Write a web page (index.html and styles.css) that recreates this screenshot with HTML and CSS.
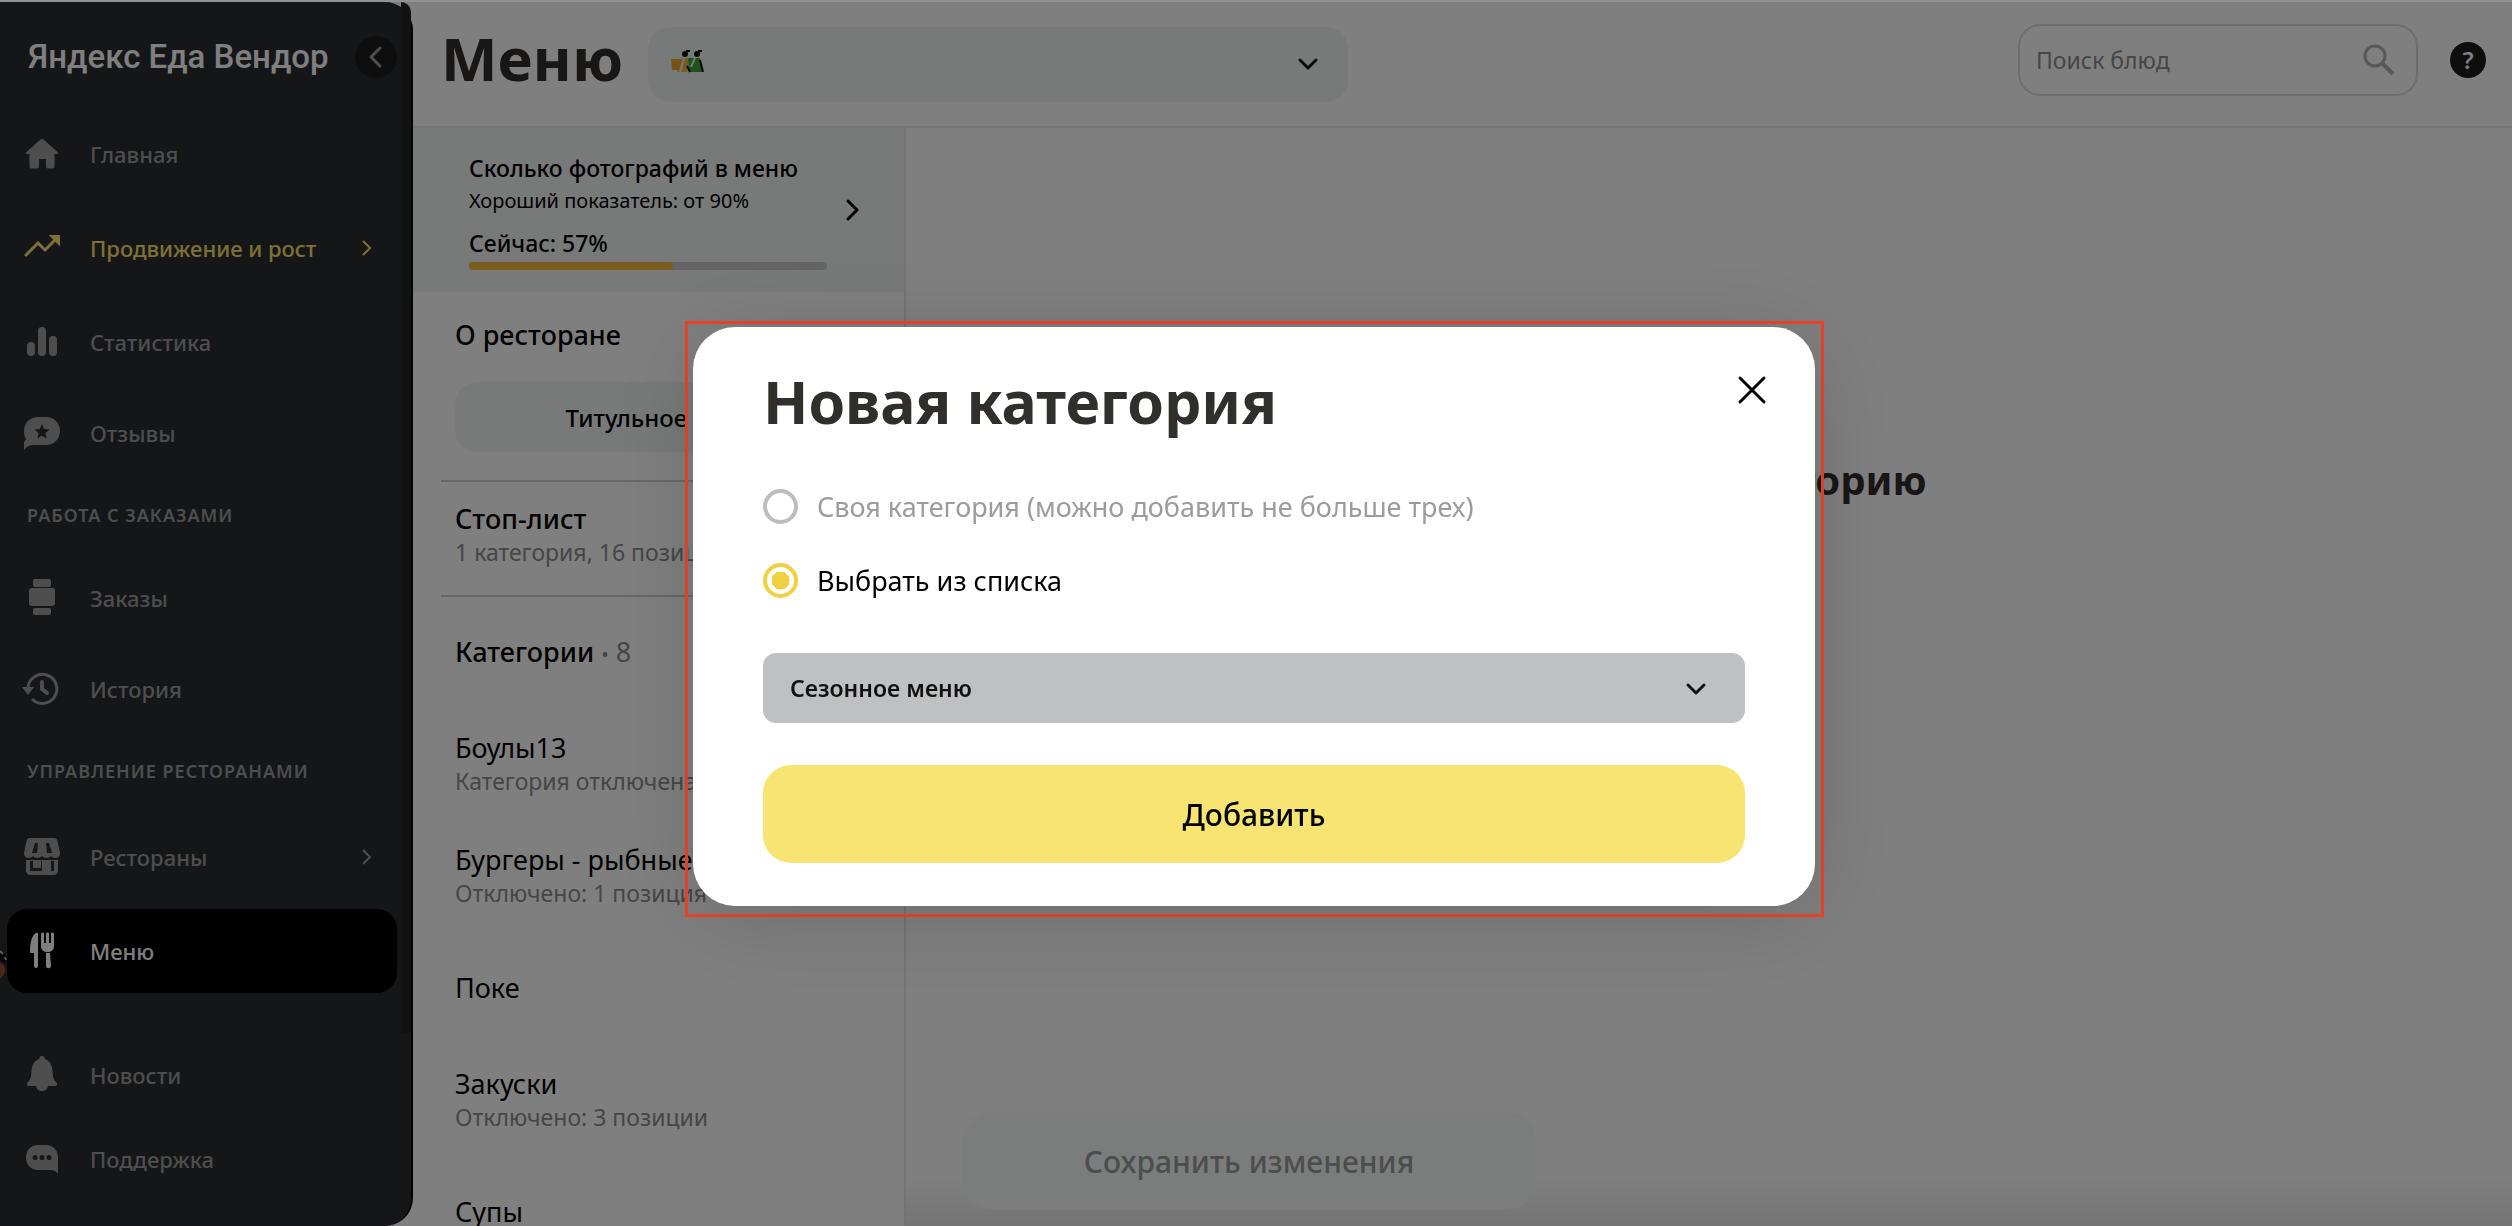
FILE: index.html
```html
<!DOCTYPE html>
<html lang="ru">
<head>
    <meta charset="UTF-8">
    <meta name="viewport" content="width=device-width, initial-scale=1.0">
    <title>Яндекс Еда Вендор</title>
    <link rel="stylesheet" href="styles.css">
</head>
<body>
    <div class="app">
        <aside class="sidebar">
            <div class="sidebar-top">
                <span class="logo">Яндекс Еда Вендор</span>
                <button type="button" class="collapse" aria-label="Свернуть">
                    <svg width="42" height="42" viewBox="0 0 42 42" fill="none" stroke="currentColor" stroke-width="3" stroke-linecap="round" stroke-linejoin="round"><path d="M25 12l-9 9 9 9"/></svg>
                </button>
            </div>

            <nav class="nav">
                <a href="#" class="nav-item">
                    <svg class="icon" viewBox="0 0 40 40" fill="currentColor"><path d="M18.500 5.500c1-.8 2-.8 3 0L35.500 18c1 1 .8 2-.5 2h-2.500v12.500a2 2 0 0 1-2 2H26a2 2 0 0 1-2-2V25h-7v7.500a2 2 0 0 1-2 2H9.500a2 2 0 0 1-2-2V20H5c-1.300 0-1.500-1-.5-2z"/></svg>
                    Главная
                </a>
                <a href="#" class="nav-item promo has-sub">
                    <svg class="icon" viewBox="0 0 40 40" fill="none" stroke="currentColor" stroke-width="3"><path d="M4 27l12-12 7 7 11-11" stroke-linecap="round"/><path d="M29 8h8v8z" fill="currentColor" stroke-width="2"/></svg>
                    Продвижение и рост
                    <svg class="arrow" viewBox="0 0 20 20" fill="none" stroke="currentColor" stroke-width="2"><path d="M6 3l7 7-7 7"/></svg>
                </a>
                <a href="#" class="nav-item">
                    <svg class="icon" viewBox="0 0 40 40" fill="currentColor"><rect x="5" y="20" width="8" height="14" rx="4"/><rect x="16" y="5" width="8" height="29" rx="4"/><rect x="27" y="14" width="8" height="20" rx="4"/></svg>
                    Статистика
                </a>
                <a href="#" class="nav-item">
                    <svg class="icon" viewBox="0 0 40 40" fill="currentColor" fill-rule="evenodd"><path d="M16 4h8c8 0 14 6 14 14s-6 14-14 14H11c-4 0-7 2-9 5v-8c1-1 2-2 2-3C2.500 24 2 21 2 18 2 10 8 4 16 4zm4 7l-2.200 5-5.300.6 4 3.600-1.200 5.400 4.700-2.800 4.700 2.800-1.200-5.400 4-3.600-5.300-.6z"/></svg>
                    Отзывы
                </a>

                <h3 class="nav-heading">РАБОТА С ЗАКАЗАМИ</h3>
                <a href="#" class="nav-item">
                    <svg class="icon" viewBox="0 0 40 40" fill="currentColor"><rect x="11" y="1" width="18" height="8" rx="2"/><rect x="7" y="10" width="26" height="18" rx="3"/><rect x="11" y="30" width="18" height="7" rx="2"/></svg>
                    Заказы
                </a>
                <a href="#" class="nav-item">
                    <svg class="icon" viewBox="0 0 40 40" fill="none" stroke="currentColor" stroke-width="3"><path d="M6 18a14.500 14.500 0 1 1 4 12"/><path d="M20 13v7l5 4" stroke-width="4" stroke-linecap="round"/><path d="M0 18h12l-6 8z" fill="currentColor" stroke="none"/></svg>
                    История
                </a>

                <h3 class="nav-heading">УПРАВЛЕНИЕ РЕСТОРАНАМИ</h3>
                <a href="#" class="nav-item has-sub">
                    <svg class="icon" viewBox="0 0 40 40" fill="currentColor" fill-rule="evenodd"><path d="M8 1h24c2 0 3 1 3.500 3L38 16c0 3-2 5-4.500 5-2 0-3.500-1-4.500-2-1 1-2.500 2-4.500 2s-3.500-1-4.500-2c-1 1-2.500 2-4.500 2s-3.500-1-4.500-2c-1 1-2.500 2-4.500 2C4 21 2 19 2 16L4.500 4C5 2 6 1 8 1zm5 5l-3 10h5l1-10zm11 0l1 10h5l-3-10z"/><path d="M4 23h32v11c0 2-2 4-4 4H8c-2 0-4-2-4-4zm4 1v10h24V24h-3v10h-9V24z"/><rect x="11" y="24" width="8" height="7"/></svg>
                    Рестораны
                    <svg class="arrow" viewBox="0 0 20 20" fill="none" stroke="currentColor" stroke-width="2"><path d="M6 3l7 7-7 7"/></svg>
                </a>
                <a href="#" class="nav-item active">
                    <svg class="icon" viewBox="0 0 40 40" fill="currentColor"><path d="M16 2v33a2 2 0 0 1-4 0V22H9c-1 0-1-1-1-2C8 11 10 4 14 2c1-.5 2-.5 2 0z"/><path d="M19 3c0-2 3-2 3 0v9h2V3c0-2 3-2 3 0v9h2V3c0-2 3-2 3 0v12c0 4-3 6-6.500 6S19 19 19 15zM24 22h4l1 13c0 3-5 3-5 0z"/></svg>
                    Меню
                </a>
                <svg class="sticker" width="8" height="32" viewBox="0 0 8 32"><path d="M0 14c4 1 6 5 5 9-1 3-3 5-5 6z" fill="#9c4a38"/><path d="M0 2c4 1 7 4 7 9l-2 3c-2-1-3-2-5-2z" fill="#0c0c0c"/><path d="M0 2l3 3M5 8l1 3" stroke="#bdbdbd" stroke-width="2"/></svg>
            </nav>

            <nav class="nav nav-bottom">
                <a href="#" class="nav-item">
                    <svg class="icon" viewBox="0 0 40 40" fill="currentColor"><path d="M20 1c2 0 2.500 1.500 3 3 5 2 7 6 7.500 12 .3 6 1 9 3.500 11 2 2 1 4-1 4h-7c-.5 3-3 5-6 5s-5.500-2-6-5H7c-2 0-3-2-1-4 2.500-2 3.200-5 3.500-11C10 10 12 6 17 4c.5-1.500 1-3 3-3z"/></svg>
                    Новости
                </a>
                <a href="#" class="nav-item">
                    <svg class="icon" viewBox="0 0 40 40" fill="currentColor" fill-rule="evenodd"><path d="M16 6h8c7 0 12 5 12 12v17c-2-3-4-4-8-4H16C9 31 4 26 4 18.500S9 6 16 6zm-3 10a2.500 2.500 0 1 0 0 5 2.500 2.500 0 0 0 0-5zm7 0a2.500 2.500 0 1 0 0 5 2.500 2.500 0 0 0 0-5zm7 0a2.500 2.500 0 1 0 0 5 2.500 2.500 0 0 0 0-5z"/></svg>
                    Поддержка
                </a>
            </nav>
            <span class="scrollbar"></span>
        </aside>

        <div class="content">
            <header class="header">
                <h1>Меню</h1>
                <div class="select-box place">
                    <svg class="couriers" width="34" height="24" viewBox="0 0 34 24">
                        <path d="M1 9h13l-1 11H2z" fill="#eaa928"/><path d="M12 8h7l-2 14H7l3-5z" fill="#f2b83a"/>
                        <path d="M18 8h12l2 14H19z" fill="#3fa339"/><path d="M14 8l-4 14M25 8l-4 9" stroke="#eee" stroke-width="2"/>
                        <circle cx="15" cy="4" r="3" fill="#111"/><circle cx="27" cy="4" r="3" fill="#111"/>
                        <path d="M16 1h4M28 1h4M17 16l3 6M30 10l3 12" stroke="#111" stroke-width="2"/>
                    </svg>
                    <select aria-label="Ресторан"><option></option></select>
                    <svg class="chevron" width="24" height="24" viewBox="0 0 24 24"><path d="M4 8l8 8 8-8"/></svg>
                </div>
                <div class="search">
                    <input type="text" placeholder="Поиск блюд" aria-label="Поиск блюд">
                    <svg width="34" height="34" viewBox="0 0 34 34" fill="none" stroke="currentColor" stroke-width="3"><circle cx="13" cy="13" r="10"/><path d="M20 20l11 11" stroke-width="4"/></svg>
                </div>
                <button type="button" class="help" aria-label="Помощь">?</button>
            </header>

            <div class="columns">
                <section class="panel">
                    <a href="#" class="photos">
                        <div class="photos-info">
                            <p class="photos-title">Сколько фотографий в меню</p>
                            <p class="photos-hint">Хороший показатель: от 90%</p>
                            <p class="photos-now">Сейчас: 57%</p>
                            <div class="progress"><div class="progress-fill" style="width: 57%"></div></div>
                        </div>
                        <svg width="24" height="24" viewBox="0 0 24 24" fill="none" stroke="currentColor" stroke-width="3" stroke-linecap="round" stroke-linejoin="round"><path d="M8 3l9 9-9 9"/></svg>
                    </a>

                    <div class="about">
                        <h2>О ресторане</h2>
                        <button type="button" class="cover-btn">Титульное фото</button>
                    </div>

                    <div class="stop-list">
                        <h2>Стоп-лист</h2>
                        <p class="note">1 категория, 16 позиций</p>
                    </div>

                    <h2 class="categories-title">Категории <span class="dot">•</span> <span>8</span></h2>
                    <ul class="categories">
                        <li>Боулы13<p class="note">Категория отключена</p></li>
                        <li>Бургеры - рыбные<p class="note">Отключено: 1 позиция</p></li>
                        <li>Поке</li>
                        <li>Закуски<p class="note">Отключено: 3 позиции</p></li>
                        <li>Супы</li>
                    </ul>
                </section>

                <main class="main">
                    <h2>Выберите категорию</h2>
                    <button type="button" class="save" disabled>Сохранить изменения</button>
                </main>
            </div>
        </div>
    </div>

    <div class="overlay">
        <div class="frame">
            <form class="modal">
                <div class="modal-top">
                    <h2>Новая категория</h2>
                    <button type="button" class="close" aria-label="Закрыть">
                        <svg width="30" height="30" viewBox="0 0 30 30" fill="none" stroke="currentColor" stroke-width="3" stroke-linecap="round"><path d="M3 3l24 24M27 3L3 27"/></svg>
                    </button>
                </div>
                <div class="radios">
                    <label class="radio muted"><input type="radio" name="kind" disabled>Своя категория (можно добавить не больше трех)</label>
                    <label class="radio"><input type="radio" name="kind" checked>Выбрать из списка</label>
                </div>
                <div class="select-box list">
                    <select aria-label="Категория"><option>Сезонное меню</option></select>
                    <svg class="chevron" width="24" height="24" viewBox="0 0 24 24"><path d="M4 9l8 8 8-8"/></svg>
                </div>
                <button type="submit" class="add">Добавить</button>
            </form>
        </div>
    </div>
</body>
</html>
```

FILE: styles.css
```css
* {
    margin: 0;
    padding: 0;
    box-sizing: border-box;
}

body {
    font-family: 'Noto Sans', 'Open Sans', sans-serif;
    font-size: 24px;
    color: #000;
    background-color: #fff;
    border-top: 2px solid #929292;
    height: 100vh;
    overflow: hidden;
}

a {
    color: inherit;
    text-decoration: none;
}

button, input, select {
    font: inherit;
    color: inherit;
    border: none;
    outline: none;
}

button {
    cursor: pointer;
}

.app {
    display: flex;
    height: 100%;
}

/* sidebar */

.sidebar {
    position: relative;
    width: 413px;
    flex-shrink: 0;
    display: flex;
    flex-direction: column;
    padding-bottom: 25px;
    background-color: #2a2c30;
    border-right: 2px solid #08080a;
    border-radius: 0 28px 28px 0;
    color: #9c9c9c;
}

.sidebar-top {
    height: 110px;
    flex-shrink: 0;
    display: flex;
    justify-content: space-between;
    padding: 34px 14px 0 28px;
}

.logo {
    font-family: Roboto, sans-serif;
    font-size: 33px;
    font-weight: 500;
    line-height: 42px;
    color: #fff;
    white-space: nowrap;
}

.collapse {
    width: 42px;
    height: 42px;
    border-radius: 50%;
    background-color: #1d1d1d;
    color: #9c9c9c;
}

.nav {
    position: relative;
    display: flex;
    flex-direction: column;
    padding: 0 14px 0 7px;
}

.nav-item {
    display: flex;
    align-items: center;
    height: 84px;
    padding: 0 20px 0 15px;
    border-radius: 20px;
    font-size: 22px;
    font-weight: 500;
    white-space: nowrap;
}

.nav-item + .nav-item {
    margin-top: 7px;
}

.nav-item.has-sub {
    height: 90px;
}

.nav-item.promo {
    color: #fee06e;
}

.nav-item.active {
    background-color: #000;
    color: #fff;
}

.nav-heading {
    height: 81px;
    line-height: 81px;
    padding-left: 20px;
    font-size: 18px;
    font-weight: 600;
    letter-spacing: 1px;
    white-space: nowrap;
}

.icon {
    width: 40px;
    height: 40px;
    margin-right: 28px;
}

.arrow {
    width: 20px;
    height: 20px;
    margin-left: auto;
}

.nav-bottom {
    margin-top: auto;
}

.nav-bottom .nav-item {
    margin-top: 0;
}

.sticker {
    position: absolute;
    left: 0;
    bottom: 12px;
}

.scrollbar {
    position: absolute;
    top: 0;
    right: 0;
    bottom: 193px;
    width: 10px;
    border-radius: 0 26px 5px 5px;
    background-color: #232428;
}

/* header */

.content {
    flex: 1;
    min-width: 0;
    display: flex;
    flex-direction: column;
}

.header {
    height: 126px;
    flex-shrink: 0;
    display: flex;
    align-items: center;
    padding: 0 26px 0 28px;
    border-bottom: 2px solid #eaeaec;
}

.header h1 {
    font-size: 60px;
    line-height: 60px;
    color: #312f2c;
    margin: 0 25px 12px 0;
}

.select-box {
    position: relative;
    display: flex;
    align-items: center;
}

.select-box select {
    appearance: none;
    width: 100%;
    height: 100%;
    background: transparent;
}

.chevron {
    position: absolute;
    pointer-events: none;
    fill: none;
    stroke: #111;
    stroke-width: 3;
    stroke-linecap: round;
    stroke-linejoin: round;
}

.place {
    flex: 0 1 700px;
    height: 75px;
    background-color: #f0f3f2;
    border-radius: 22px;
    padding-left: 22px;
}

.place .chevron {
    right: 28px;
}

.couriers {
    flex-shrink: 0;
    margin-bottom: 4px;
}

.search {
    width: 400px;
    height: 72px;
    margin: 0 32px 8px auto;
    padding: 0 20px 0 16px;
    display: flex;
    align-items: center;
    border: 2px solid #dadada;
    border-radius: 22px;
    color: #b0b0b0;
}

.search input {
    flex: 1;
    min-width: 0;
    background: transparent;
    font-size: 23px;
}

.search input::placeholder {
    color: #8c8c8c;
}

.help {
    width: 36px;
    height: 36px;
    margin-bottom: 8px;
    border-radius: 50%;
    background-color: #1c1c1c;
    color: #fff;
    font-weight: 600;
    line-height: 36px;
}

/* left panel */

.columns {
    flex: 1;
    min-height: 0;
    display: flex;
}

.panel {
    width: 493px;
    flex-shrink: 0;
    border-right: 2px solid #e6e6e8;
}

.panel h2 {
    font-size: 27px;
    font-weight: 500;
    line-height: 34px;
}

.photos {
    display: flex;
    align-items: center;
    gap: 13px;
    height: 164px;
    padding-left: 56px;
    background-color: #f0f3f2;
}

.photos-info {
    width: 358px;
    white-space: nowrap;
}

.photos-title,
.photos-now {
    font-size: 23px;
    font-weight: 500;
    line-height: 34px;
}

.photos-hint {
    font-size: 20px;
    line-height: 32px;
}

.photos-now {
    margin: 9px 0 2px;
}

.progress {
    height: 8px;
    border-radius: 4px;
    background-color: #c8c9cc;
}

.progress-fill {
    height: 100%;
    border-radius: 4px;
    background-color: #f5bb3d;
}

.about {
    margin: 0 28px;
    padding: 26px 14px 28px;
    border-bottom: 2px solid #cfcfcf;
}

.cover-btn {
    width: 100%;
    height: 70px;
    margin-top: 30px;
    border-radius: 22px;
    background-color: #f0f3f2;
    font-size: 24px;
    font-weight: 500;
}

.stop-list {
    margin: 0 28px;
    padding: 20px 14px 27px;
    border-bottom: 2px solid #cfcfcf;
}

.note {
    font-size: 23px;
    line-height: 32px;
    color: #8c8c8c;
}

.categories-title {
    padding: 38px 42px 36px;
}

.categories-title span {
    color: #8c8c8c;
    font-weight: 400;
}

.categories-title .dot {
    font-size: 20px;
}

.categories {
    list-style: none;
    padding: 0 42px;
}

.categories li {
    display: flex;
    flex-direction: column;
    justify-content: center;
    height: 112px;
    font-size: 27px;
    line-height: 34px;
}

/* main area */

.main {
    flex: 1;
    display: flex;
    flex-direction: column;
    align-items: center;
    justify-content: space-between;
    padding: 325px 56px 16px;
    background: linear-gradient(to top, #e8e8e8, #fff 48px);
}

.main h2 {
    font-size: 40px;
    line-height: 54px;
    color: #312f2c;
}

.save {
    align-self: flex-start;
    width: 574px;
    height: 98px;
    border-radius: 30px;
    background-color: #f7faf9;
    color: #989a9b;
    font-size: 30px;
    font-weight: 500;
}

/* dialog */

.overlay {
    position: fixed;
    inset: 2px 0 0;
    display: flex;
    align-items: center;
    justify-content: center;
    padding: 10px 3px 0 0;
    background-color: rgba(0, 0, 0, 0.5);
}

.frame {
    width: 1139px;
    max-width: 100%;
    padding: 3px 6px 8px 5px;
    border: 3px solid #ec4529;
}

.modal {
    padding: 34px 70px 43px;
    border-radius: 42px;
    background-color: #fff;
    box-shadow: 0 10px 90px rgba(0, 0, 0, 0.15);
}

.modal-top {
    display: flex;
    justify-content: space-between;
}

.modal-top h2 {
    font-size: 59px;
    line-height: 80px;
    color: #312f2c;
}

.close {
    width: 30px;
    height: 30px;
    margin: 14px -22px 0 0;
    background: transparent;
}

.radios {
    display: flex;
    flex-direction: column;
    gap: 35px;
    margin: 46px 0 53px;
}

.radio {
    display: flex;
    align-items: center;
    gap: 19px;
    height: 39px;
    font-size: 27px;
}

.radio input {
    appearance: none;
    width: 35px;
    height: 35px;
    border: 4px solid #bdbdbd;
    border-radius: 50%;
}

.radio input:checked {
    border-color: #f0d143;
    background: radial-gradient(circle, #f0d143 9px, #fff 9px);
}

.muted {
    color: #9c9c9c;
}

.list {
    height: 70px;
    border-radius: 13px;
    background-color: #bfc0c2;
}

.list select {
    padding: 0 27px;
    font-size: 23px;
    font-weight: 600;
    color: #111;
}

.list .chevron {
    right: 37px;
}

.add {
    width: 100%;
    height: 98px;
    margin-top: 42px;
    border-radius: 28px;
    background-color: #f8e473;
    font-size: 30px;
    font-weight: 500;
}
```
